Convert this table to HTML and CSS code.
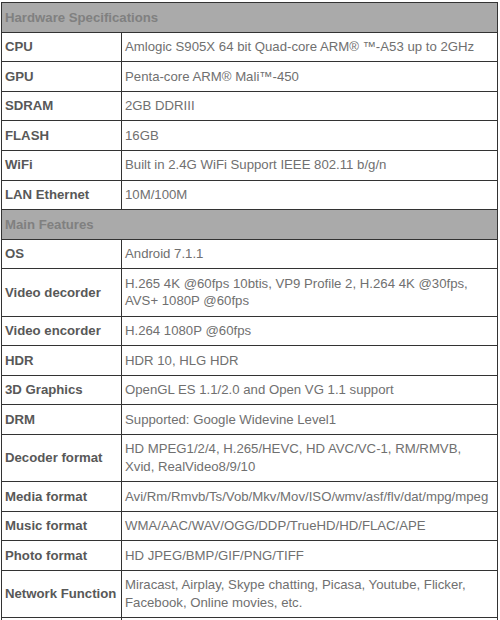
FILE: index.html
```html
<!DOCTYPE html>
<html>
<head>
<meta charset="utf-8">
<link rel="stylesheet" href="styles.css">
</head>
<body>
<table class="spec">
  <colgroup><col class="col-label"><col class="col-value"></colgroup>
  <tr class="section"><td colspan="2">Hardware Specifications</td></tr>
  <tr><th>CPU</th><td>Amlogic S905X 64 bit Quad-core ARM® ™-A53 up to 2GHz</td></tr>
  <tr><th>GPU</th><td>Penta-core ARM® Mali™-450</td></tr>
  <tr><th>SDRAM</th><td>2GB DDRIII</td></tr>
  <tr><th>FLASH</th><td>16GB</td></tr>
  <tr><th>WiFi</th><td>Built in 2.4G WiFi Support IEEE 802.11 b/g/n</td></tr>
  <tr><th>LAN Ethernet</th><td>10M/100M</td></tr>
  <tr class="section"><td colspan="2">Main Features</td></tr>
  <tr><th>OS</th><td>Android 7.1.1</td></tr>
  <tr><th>Video decorder</th><td>H.265 4K @60fps 10btis, VP9 Profile 2, H.264 4K @30fps,<br>AVS+ 1080P @60fps</td></tr>
  <tr><th>Video encorder</th><td>H.264 1080P @60fps</td></tr>
  <tr><th>HDR</th><td>HDR 10, HLG HDR</td></tr>
  <tr><th>3D Graphics</th><td>OpenGL ES 1.1/2.0 and Open VG 1.1 support</td></tr>
  <tr><th>DRM</th><td>Supported: Google Widevine Level1</td></tr>
  <tr><th>Decoder format</th><td>HD MPEG1/2/4, H.265/HEVC, HD AVC/VC-1, RM/RMVB,<br>Xvid, RealVideo8/9/10</td></tr>
  <tr><th>Media format</th><td>Avi/Rm/Rmvb/Ts/Vob/Mkv/Mov/ISO/wmv/asf/flv/dat/mpg/mpeg</td></tr>
  <tr><th>Music format</th><td>WMA/AAC/WAV/OGG/DDP/TrueHD/HD/FLAC/APE</td></tr>
  <tr><th>Photo format</th><td>HD JPEG/BMP/GIF/PNG/TIFF</td></tr>
  <tr><th>Network Function</th><td>Miracast, Airplay, Skype chatting, Picasa, Youtube, Flicker,<br>Facebook, Online movies, etc.</td></tr>
  <tr><th>&nbsp;</th><td>&nbsp;</td></tr>
</table>
</body>
</html>
```
FILE: styles.css
```css
html, body {
  margin: 0;
  padding: 0;
  background: #ffffff;
}
body {
  padding: 2px 0 0 1px;
  font-family: "Liberation Sans", Arial, sans-serif;
  font-size: 13.2px;
  color: #707070;
}
.spec {
  border-collapse: collapse;
  width: 497px;
  table-layout: fixed;
}
.col-label {
  width: 120px;
}
.spec th, .spec td {
  border: 1px solid #333333;
  padding: 5.5px 3px 5.5px 3px;
  line-height: 17.6px;
  text-align: left;
  vertical-align: middle;
  white-space: nowrap;
  overflow: hidden;
}
.spec th {
  font-weight: bold;
  color: #585858;
}
.spec .section td {
  background: #aaaaaa;
  color: #808080;
  font-weight: bold;
}
```
